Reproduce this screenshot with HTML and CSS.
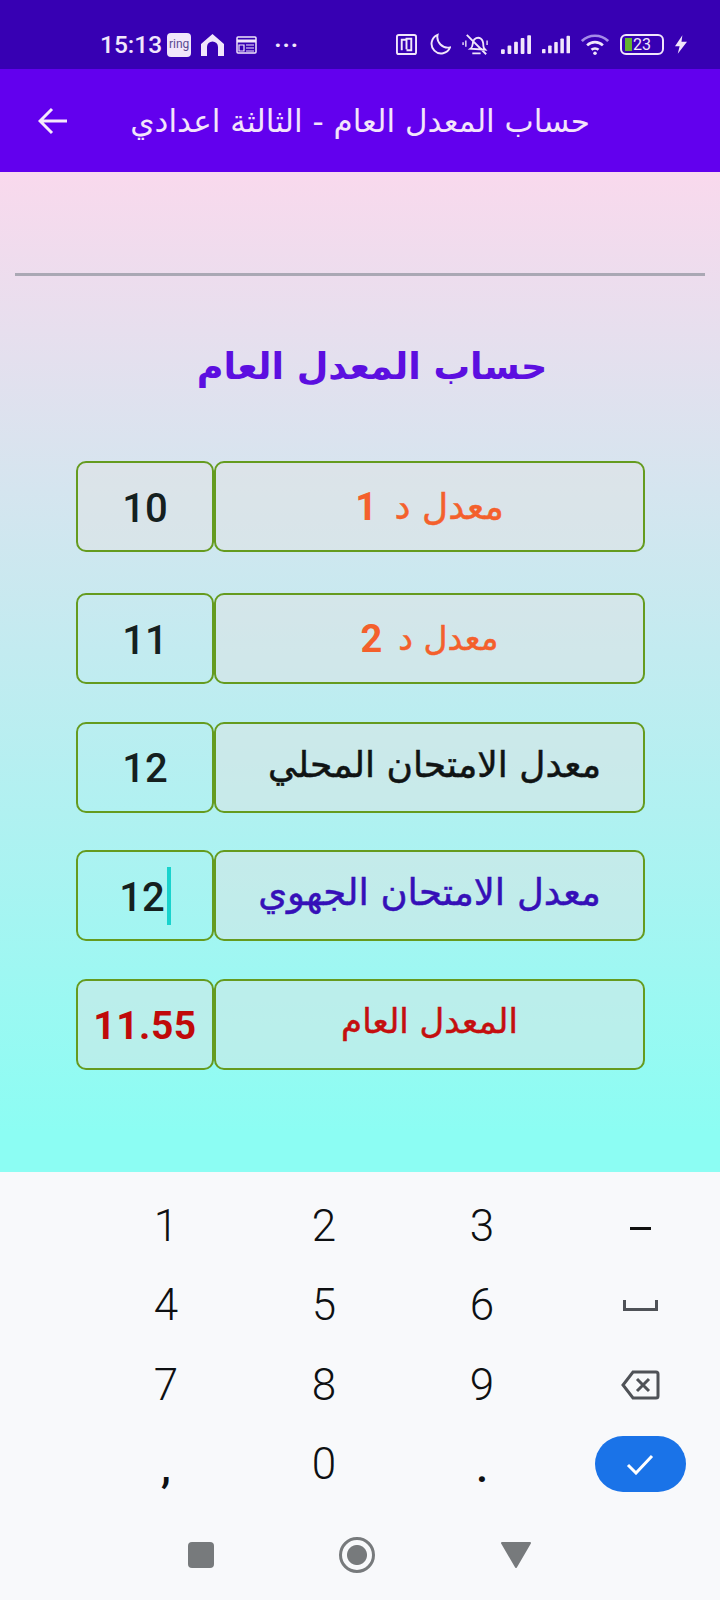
FILE: index.html
```html
<!DOCTYPE html>
<html lang="ar">
<head>
    <meta charset="UTF-8">
    <meta name="viewport" content="width=device-width, initial-scale=1.0">
    <title>حساب المعدل العام</title>
    <link rel="stylesheet" href="styles.css">
</head>
<body>
    <div class="status-bar">
        <div class="status-left">
            <span class="time">15:13</span>
            <span class="ring">ring</span>
            <svg width="25" height="24" viewBox="0 0 25 24"><path d="M1 11 12.5 1 24 11v12h-6v-9a5.5 5.500 0 0 0-11 0v9H1z" fill="#f1e6fb"/></svg>
            <svg class="cal" width="21" height="19" viewBox="0 0 21 19" fill="none" stroke="#f1e6fb" stroke-width="1.5"><rect x="1" y="2" width="19" height="16" rx="1"/><path d="M1 6h19" stroke-width="3"/><path d="M10 10h8M10 13h8M10 16h8M3 10h5v6H3z" stroke-width="1.2"/></svg>
            <span class="dots">···</span>
        </div>
        <div class="status-right">
            <svg width="21" height="21" viewBox="0 0 22 22" fill="none" stroke="#f1e6fb" stroke-width="2"><rect x="1" y="1" width="20" height="20" rx="2"/><path d="M6 17V6h5v6M11 16V5h5v12h-5"/></svg>
            <svg width="23" height="23" viewBox="0 0 24 24" fill="none" stroke="#f1e6fb" stroke-width="2"><path d="M10 2a10 10 0 1 0 13 13A11 11 0 0 1 10 2z"/></svg>
            <svg width="28" height="24" viewBox="0 0 30 26" fill="none" stroke="#f1e6fb" stroke-width="2"><path d="M9 17c3-2 2-5 3-8s5-5 8-3 3 6 3 8 1 3 2 4zM11 22h9M5 2l21 21"/><path d="M4 8v7M1 10v3M27 8v5" stroke-width="1.5"/></svg>
            <svg class="bars" width="30" height="19" viewBox="0 0 32 20" fill="#f1e6fb"><rect x="0" y="15" width="4" height="5" rx="1"/><rect x="7" y="11" width="4" height="9" rx="1"/><rect x="14" y="7" width="4" height="13" rx="1"/><rect x="21" y="3" width="4" height="17" rx="1"/><rect x="28" y="0" width="4" height="20" rx="1"/></svg>
            <svg class="bars" width="28" height="19" viewBox="0 0 32 20" fill="#f1e6fb"><rect x="0" y="15" width="4" height="5" rx="1"/><rect x="7" y="11" width="4" height="9" rx="1"/><rect x="14" y="7" width="4" height="13" rx="1"/><rect x="21" y="3" width="4" height="17" rx="1"/><rect x="28" y="0" width="4" height="20" rx="1"/></svg>
            <svg width="28" height="21" viewBox="0 0 32 24" fill="none" stroke-width="3"><path d="M1 8c8-8 22-8 30 0" stroke="#a58be8"/><path d="M7 13c5-5 13-5 18 0M12 18c2-2 6-2 8 0" stroke="#f1e6fb"/><circle cx="16" cy="22" r="2" fill="#f1e6fb"/></svg>
            <span class="battery"><span class="battery-fill"></span>23</span>
            <svg class="bolt" width="12" height="19" viewBox="0 0 13 20"><path d="M8 0 0 12h5l-2 8 10-13H7z" fill="#f1e6fb"/></svg>
        </div>
    </div>

    <header class="app-bar">
        <svg class="back" width="30" height="28" viewBox="0 0 30 28" fill="none" stroke="#f5e8fc" stroke-width="3"><path d="M29 14H3M14 2 2 14l12 12"/></svg>
        <h1 dir="rtl">حساب المعدل العام - الثالثة اعدادي</h1>
    </header>

    <main class="content">
        <hr class="divider">
        <h2 dir="rtl">حساب المعدل العام</h2>

        <div class="rows">
            <div class="row first">
                <div class="box value filled">10</div>
                <div class="box label orange size-36 low" dir="rtl">معدل د&nbsp; <b>1</b></div>
            </div>
            <div class="row">
                <div class="box value">11</div>
                <div class="box label orange size-33 low" dir="rtl">معدل د <b class="wide">2</b></div>
            </div>
            <div class="row">
                <div class="box value">12</div>
                <div class="box label black size-36 nudge" dir="rtl">معدل الامتحان المحلي</div>
            </div>
            <div class="row">
                <div class="box value">12<span class="caret"></span></div>
                <div class="box label blue size-37" dir="rtl">معدل الامتحان الجهوي</div>
            </div>
            <div class="row">
                <div class="box value filled result">11.55</div>
                <div class="box label red size-34" dir="rtl">المعدل العام</div>
            </div>
        </div>
    </main>

    <section class="keyboard">
        <div class="keys">
            <span>1</span><span>2</span><span>3</span><span class="minus"></span>
            <span>4</span><span>5</span><span>6</span>
            <span><svg width="35" height="11" viewBox="0 0 35 11" fill="none" stroke="#4f5257" stroke-width="3"><path d="M1.500 0v9.500h32V0"/></svg></span>
            <span>7</span><span>8</span><span>9</span>
            <span><svg width="39" height="30" viewBox="0 0 39 30" fill="none" stroke="#4f5257" stroke-width="3"><path d="M12 2h23a2 2 0 0 1 2 2v22a2 2 0 0 1-2 2H12L2 15z"/><path d="M16 9l12 12M28 9 16 21"/></svg></span>
            <span class="comma">,</span><span>0</span><span class="comma">.</span>
            <span><span class="done"><svg width="28" height="22" viewBox="0 0 28 22" fill="none" stroke="#fff" stroke-width="3"><path d="M2 12l8 8L26 3"/></svg></span></span>
        </div>
        <nav class="nav-bar">
            <span class="nav-square"></span>
            <span class="nav-circle"></span>
            <svg width="32" height="26" viewBox="0 0 32 26"><path d="M2 1h28L16 25z" fill="#777a7c" stroke="#777a7c" stroke-width="2" stroke-linejoin="round"/></svg>
        </nav>
    </section>
</body>
</html>
```

FILE: styles.css
```css
* {
    box-sizing: border-box;
}

body {
    margin: 0;
    width: 720px;
    height: 1600px;
    overflow: hidden;
    display: flex;
    flex-direction: column;
    font-family: "DejaVu Sans", Roboto, sans-serif;
    background: #f8f9fb;
}

.status-bar {
    height: 69px;
    padding: 20px 33px 0 100px;
    display: flex;
    justify-content: space-between;
    align-items: center;
    background: #3700b3;
    color: #f1e6fb;
}

.status-left,
.status-right {
    display: flex;
    align-items: center;
}

.status-left {
    gap: 9px;
}

.status-right {
    gap: 11px;
}

.time {
    font-family: Roboto, sans-serif;
    font-size: 24.500px;
    font-weight: 500;
    margin-right: -4px;
}

.ring {
    width: 24px;
    height: 24px;
    border-radius: 4px;
    background: #f1e6fb;
    color: #5a4a90;
    font-family: Roboto, sans-serif;
    font-size: 12px;
    line-height: 22px;
    text-align: center;
}

.cal {
    margin-left: 2px;
}

.dots {
    font-family: Roboto, sans-serif;
    font-size: 24px;
    font-weight: 700;
    letter-spacing: 1px;
    margin-left: 8px;
}

.battery {
    position: relative;
    width: 44px;
    height: 21px;
    border: 2px solid #f1e6fb;
    border-radius: 6px;
    padding-left: 11px;
    font-family: Roboto, sans-serif;
    font-size: 16px;
    line-height: 17px;
}

.battery-fill {
    position: absolute;
    left: 3px;
    top: 2px;
    width: 7px;
    height: 13px;
    background: #63b32e;
}

.app-bar {
    height: 103px;
    padding: 0 130px 0 38px;
    display: flex;
    align-items: center;
    justify-content: space-between;
    background: #6200ee;
}

.app-bar h1 {
    margin: 0;
    font-size: 31px;
    font-weight: normal;
    white-space: nowrap;
    color: #f3e4fb;
}

.back {
    flex: none;
}

.content {
    height: 1000px;
    padding-top: 101px;
    background: linear-gradient(#f9d9ed, #8cfdf3 96%);
}

.divider {
    height: 3px;
    margin: 0 15px;
    border: 0;
    background: #aaa8b4;
}

.content h2 {
    margin: 61px 0 0;
    height: 60px;
    font-size: 36.500px;
    line-height: 60px;
    font-weight: bold;
    text-align: center;
    padding-left: 24px;
    color: #5c0fe0;
}

.rows {
    display: flex;
    flex-direction: column;
    gap: 37.500px;
    padding: 0 75px 0 76px;
    margin-top: 64px;
}

.row {
    display: flex;
    height: 91px;
}

.row.first {
    margin-bottom: 3.500px;
}

.box {
    display: flex;
    align-items: center;
    justify-content: center;
    border: 2px solid #659b1f;
    border-radius: 10px;
}

.value {
    width: 138px;
    padding-top: 3px;
    font-family: Roboto, sans-serif;
    font-size: 40px;
    font-weight: 500;
    color: #15201f;
}

.filled {
    background: rgba(226, 226, 226, 0.45);
}

.value.result {
    font-size: 39px;
    font-weight: 700;
    letter-spacing: 0.5px;
    color: #c00a0a;
}

.caret {
    width: 4px;
    height: 58px;
    margin-left: 2px;
    margin-top: -3px;
    background: #18d3cd;
}

.label {
    flex: 1;
    background: rgba(226, 226, 226, 0.45);
    padding-bottom: 6px;
    -webkit-text-stroke: 0.5px currentColor;
}

.label.low {
    padding-bottom: 0;
}

.nudge {
    padding-left: 10px;
}

.size-33 {
    font-size: 33px;
}

.size-34 {
    font-size: 34px;
}

.size-36 {
    font-size: 36px;
}

.size-37 {
    font-size: 37px;
}

.label b {
    font-family: Roboto, sans-serif;
    font-size: 38px;
    font-weight: 700;
    margin-right: 6px;
    -webkit-text-stroke: 0;
}

.label b.wide {
    margin-right: 16px;
}

.orange {
    color: #f4602c;
}

.black {
    color: #101414;
}

.blue {
    color: #3510b8;
}

.red {
    color: #c40f0f;
}

.keyboard {
    flex: 1;
    background: #f8f9fb;
}

.keys {
    display: grid;
    grid-template-columns: repeat(4, 158px);
    grid-auto-rows: 79.500px;
    padding: 14px 0 0 87px;
    height: 340px;
}

.keys > span {
    display: flex;
    align-items: center;
    justify-content: center;
    font-family: Roboto, sans-serif;
    font-size: 44px;
    font-weight: 300;
    color: #0e1012;
}

.keys > .comma {
    padding-top: 6px;
    font-weight: 500;
}

.keys .minus::before {
    content: "";
    width: 21px;
    height: 3px;
    margin-top: 6px;
    background: #111;
}

.done {
    width: 91px;
    height: 56px;
    border-radius: 28px;
    display: flex;
    align-items: center;
    justify-content: center;
    background: #1a73e8;
}

.nav-bar {
    display: flex;
    align-items: center;
    justify-content: space-between;
    height: 88px;
    padding: 0 188px;
    margin-top: -1px;
}

.nav-square {
    width: 26px;
    height: 26px;
    border-radius: 4px;
    background: #777a7c;
}

.nav-circle {
    width: 36px;
    height: 36px;
    border: 3px solid #777a7c;
    border-radius: 50%;
    background: radial-gradient(#777a7c 0 9.500px, transparent 10.500px);
}
```
